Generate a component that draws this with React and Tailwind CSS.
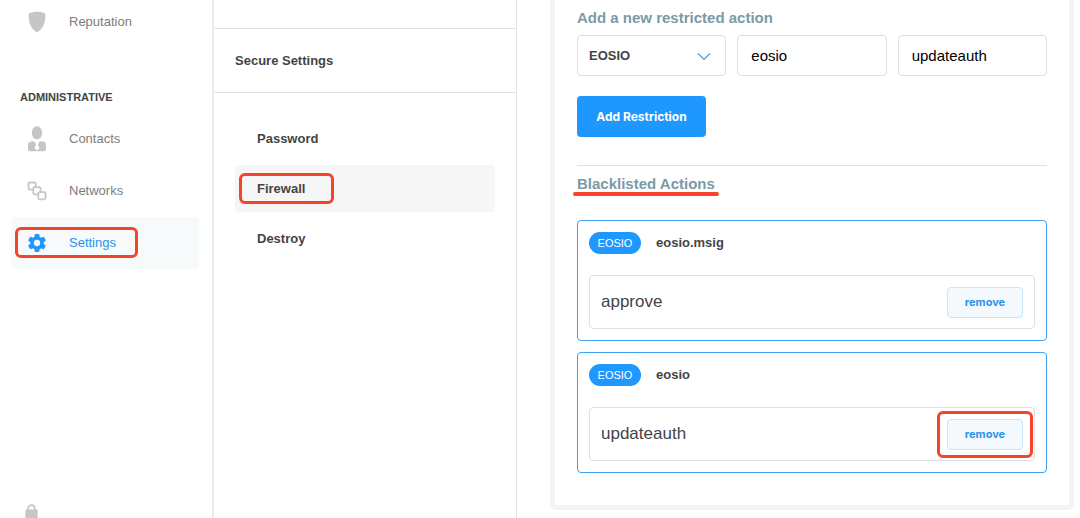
import { useState } from 'react';

const ReputationIcon = () => (
  <svg width="18" height="22" viewBox="0 0 18 22" fill="currentColor">
    <path d="M.8 2.600C3.300 1.300 6 .8 9 .8s5.700.5 8.200 1.800c.3 4.400.1 8.200-1.700 11.800-1.500 3-3.700 5.300-6.500 6.900-2.800-1.600-5-3.900-6.500-6.900C.7 10.800.5 7 .8 2.600z" />
  </svg>
);

const ContactsIcon = () => (
  <svg width="20" height="26" viewBox="0 0 20 26" fill="currentColor">
    <ellipse cx="10" cy="6.800" rx="5.200" ry="6.500" />
    <path d="M5.500 15.300c1.500 0 2.500 1.700 4.500 1.700s3-1.700 4.500-1.700c3 0 4.500 1.300 4.500 3.700v4c0 1.800-.9 2.300-2.500 2.300h-13C1.900 25.300 1 24.800 1 23v-4c0-2.400 1.500-3.700 4.500-3.700z" />
    <path d="M8 16.500h4l-1 2.500 1.500 3.300L10 24.600l-2.500-2.300L9 19z" fill="#fff" />
  </svg>
);

const NetworksIcon = () => (
  <svg width="20" height="20" viewBox="0 0 20 20" fill="#fff" stroke="currentColor" strokeWidth="1.800">
    <rect x="1.500" y="1.500" width="7.200" height="7.200" rx="1.200" />
    <rect x="6.300" y="6.100" width="7.200" height="7.200" rx="1.200" />
    <rect x="11.300" y="11.100" width="7.200" height="7.200" rx="1.200" />
  </svg>
);

const SettingsIcon = () => (
  <svg width="18" height="18" viewBox="2 2 20 20" fill="currentColor">
    <path d="M19.430 12.980c.04-.32.07-.64.07-.98s-.03-.66-.07-.98l2.110-1.650c.19-.15.24-.42.12-.64l-2-3.460c-.12-.22-.39-.3-.61-.22l-2.490 1c-.52-.4-1.080-.73-1.690-.98l-.38-2.650C14.460 2.180 14.250 2 14 2h-4c-.25 0-.46.18-.49.42l-.38 2.650c-.61.25-1.170.59-1.690.98l-2.490-1c-.23-.09-.49 0-.61.22l-2 3.460c-.13.22-.07.49.12.64l2.110 1.650c-.04.32-.07.65-.07.98s.03.66.07.98l-2.110 1.650c-.19.15-.24.42-.12.64l2 3.460c.12.22.39.3.61.22l2.490-1c.52.4 1.080.73 1.690.98l.38 2.650c.03.24.24.42.49.42h4c.25 0 .46-.18.49-.42l.38-2.650c.61-.25 1.170-.59 1.690-.98l2.490 1c.23.09.49 0 .61-.22l2-3.460c.12-.22.07-.49-.12-.64zM12 15.500a3.500 3.500 0 1 1 0-7 3.500 3.500 0 0 1 0 7z" />
  </svg>
);

const LockIcon = () => (
  <svg width="13" height="18" viewBox="0 0 13 18" fill="currentColor">
    <path d="M3.200 6V4.500a3.300 3.300 0 0 1 6.600 0V6" fill="none" stroke="currentColor" strokeWidth="1.800" />
    <rect x="0.300" y="5.600" width="12.400" height="12" rx="1.200" />
  </svg>
);

const MenuItem = ({ icon: Icon, label, active, className = '' }) => (
  <a
    href="#"
    className={`relative flex h-[52px] shrink-0 items-center rounded ${active ? 'bg-[#f6fafb] text-[#2b93ec]' : 'text-[#7d7d7d]'} ${className}`}
  >
    <span className={`flex w-[52px] justify-center ${active ? 'text-[#1e98ff]' : 'text-[#c6c6c6]'}`}>
      <Icon />
    </span>
    <span className="pl-[6px] text-[13px]">{label}</span>
    {active && <span className="absolute top-[10px] left-1 h-[31px] w-[123px] rounded-md border-3 border-[#f4452a]" />}
  </a>
);

const settingsTabs = ['Password', 'Firewall', 'Destroy'];

const blacklist = [
  { chain: 'EOSIO', contract: 'eosio.msig', action: 'approve' },
  { chain: 'EOSIO', contract: 'eosio', action: 'updateauth', marked: true },
];

const App = () => {
  const [tab, setTab] = useState('Firewall');
  const [contract, setContract] = useState('eosio');
  const [action, setAction] = useState('updateauth');

  return (
    <div className="flex h-screen overflow-hidden bg-white font-['Liberation_Sans',Arial,sans-serif] text-[#444]">
      {/* Sidebar */}
      <aside className="flex w-[214px] shrink-0 flex-col border-r-2 border-[#ececec] pr-[13px] pl-[11px]">
        <MenuItem icon={ReputationIcon} label="Reputation" className="-mt-1" />
        <h2 className="mt-[39px] mb-[6px] pl-[9px] text-[11px] leading-5 font-bold">ADMINISTRATIVE</h2>
        <MenuItem icon={ContactsIcon} label="Contacts" />
        <MenuItem icon={NetworksIcon} label="Networks" />
        <MenuItem icon={SettingsIcon} label="Settings" active />
        <div className="mt-auto h-[14px] overflow-hidden pl-[14px] text-[#c6c6c6]">
          <LockIcon />
        </div>
      </aside>

      {/* Settings sections */}
      <section className="w-[303px] shrink-0 border-r border-[#e2e2e2]">
        <div className="h-[29px] border-b border-[#e2e2e2]" />
        <h2 className="flex h-16 items-center border-b border-[#e2e2e2] pl-[21px] text-[13px] font-bold">
          Secure Settings
        </h2>
        <nav className="flex flex-col gap-[3px] px-[21px] pt-[22px]">
          {settingsTabs.map((name) => (
            <button
              key={name}
              onClick={() => setTab(name)}
              className={`relative h-[47px] rounded pl-[22px] text-left text-[13px] font-bold ${tab === name ? 'bg-[#f6f6f6]' : ''}`}
            >
              {name}
              {tab === name && <span className="absolute top-2 left-1 h-[31px] w-[95px] rounded-md border-3 border-[#f4452a]" />}
            </button>
          ))}
        </nav>
      </section>

      {/* Firewall */}
      <main className="mr-[6px] ml-[33px] min-w-0 flex-1 self-start rounded-b-md border-x-5 border-b-5 border-[#f2f5f6] px-[22px] pt-2 pb-8">
        <h3 className="text-[15px] leading-5 font-bold text-[#7b9aa6]">Add a new restricted action</h3>
        <div className="mt-[7px] grid grid-cols-3 gap-[11px]">
          <div className="relative">
            <select
              aria-label="Blockchain"
              className="h-[41px] w-full appearance-none rounded border border-[#dfdfdf] bg-white px-[11px] text-[13px] font-bold text-[#444]"
            >
              <option>EOSIO</option>
            </select>
            <svg className="pointer-events-none absolute top-[17px] right-[15px]" width="14" height="9" viewBox="0 0 14 9" fill="none" stroke="#3ba0f5" strokeWidth="1.200">
              <path d="M1 1.500 7 7.500l6-6" />
            </svg>
          </div>
          <input
            aria-label="Contract"
            value={contract}
            onChange={(e) => setContract(e.target.value)}
            className="h-[41px] w-full rounded border border-[#dfdfdf] px-[13px] text-[15px] text-black"
          />
          <input
            aria-label="Action"
            value={action}
            onChange={(e) => setAction(e.target.value)}
            className="h-[41px] w-full rounded border border-[#dfdfdf] px-[13px] text-[15px] text-black"
          />
        </div>
        <button className="mt-5 block h-[41px] w-[129px] rounded bg-[#1e98ff] font-['Inter',sans-serif] text-xs font-bold text-white">
          Add Restriction
        </button>

        <div className="mt-7 border-t border-[#dfdfdf] pt-2">
          <h3 className="relative inline-block align-top text-[15px] leading-5 font-bold text-[#7b9aa6]">
            Blacklisted Actions
            <span className="absolute top-[18px] -right-1 -left-1 h-1 rounded-full bg-[#f4452a]" />
          </h3>
        </div>

        <ul className="mt-[22px] flex flex-col gap-[11px]">
          {blacklist.map((item) => (
            <li key={item.contract} className="rounded border border-[#3d9fee] p-[11px]">
              <div className="flex items-center">
                <span className="flex h-[22px] w-[52px] items-center justify-center rounded-full bg-[#1e98ff] text-[11px] text-white">
                  {item.chain}
                </span>
                <span className="pl-[15px] text-[13px] font-bold">{item.contract}</span>
              </div>
              <div className="mt-[21px] flex h-[54px] items-center justify-between rounded border border-[#dfdfdf] px-[11px]">
                <span className="text-[17px]">{item.action}</span>
                <div className="relative">
                  <button className="block h-[31px] w-[76px] rounded border border-[#c9e5f8] bg-[#f3f9fd] font-['Inter',sans-serif] text-[11px] font-bold text-[#2b93ec]">
                    remove
                  </button>
                  {item.marked && <span className="absolute -inset-x-[10px] -inset-y-2 rounded-md border-3 border-[#f4452a]" />}
                </div>
              </div>
            </li>
          ))}
        </ul>
      </main>
    </div>
  );
};

export default App;
